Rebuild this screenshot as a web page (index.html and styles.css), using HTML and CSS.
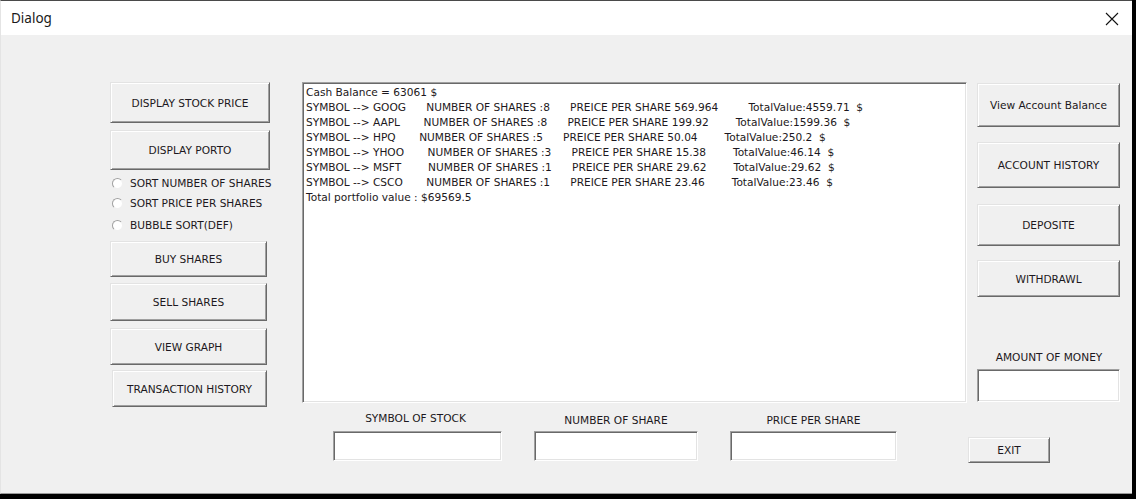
FILE: index.html
```html
<!DOCTYPE html>
<html>
<head>
<meta charset="utf-8">
<title>Dialog</title>
<link rel="stylesheet" href="styles.css">
</head>
<body>
<div class="window">
  <div class="titlebar">
    <span class="title">Dialog</span>
    <svg class="close" width="14" height="14" viewBox="0 0 14 14"><path d="M1 1 L13 13 M13 1 L1 13" stroke="#111" stroke-width="1.1" fill="none"/></svg>
  </div>
  <div class="client">
    <div class="col-left">
      <div class="btn b-stock">DISPLAY STOCK PRICE</div>
      <div class="btn b-porto">DISPLAY PORTO</div>
      <div class="radio r1"><span class="dot"></span>SORT NUMBER OF SHARES</div>
      <div class="radio r2"><span class="dot"></span>SORT PRICE PER SHARES</div>
      <div class="radio r3"><span class="dot"></span>BUBBLE SORT(DEF)</div>
      <div class="btn b-buy">BUY SHARES</div>
      <div class="btn b-sell">SELL SHARES</div>
      <div class="btn b-graph">VIEW GRAPH</div>
      <div class="btn b-trans">TRANSACTION HISTORY</div>
    </div>
    <div class="col-mid">
      <div class="output sunken"><div class="line">Cash Balance = 63061 $</div><div class="line">SYMBOL --&gt; GOOG      NUMBER OF SHARES :8      PREICE PER SHARE 569.964         TotalValue:4559.71  $</div><div class="line">SYMBOL --&gt; AAPL       NUMBER OF SHARES :8      PREICE PER SHARE 199.92        TotalValue:1599.36  $</div><div class="line">SYMBOL --&gt; HPQ       NUMBER OF SHARES :5      PREICE PER SHARE 50.04        TotalValue:250.2  $</div><div class="line">SYMBOL --&gt; YHOO       NUMBER OF SHARES :3      PREICE PER SHARE 15.38        TotalValue:46.14  $</div><div class="line">SYMBOL --&gt; MSFT        NUMBER OF SHARES :1      PREICE PER SHARE 29.62        TotalValue:29.62  $</div><div class="line">SYMBOL --&gt; CSCO       NUMBER OF SHARES :1      PREICE PER SHARE 23.46        TotalValue:23.46  $</div><div class="line">Total portfolio value : $69569.5</div></div>
      <div class="fields">
        <div class="field f1"><div class="label l-up">SYMBOL OF STOCK</div><div class="input sunken"></div></div>
        <div class="field f2"><div class="label">NUMBER OF SHARE</div><div class="input sunken"></div></div>
        <div class="field f3"><div class="label">PRICE PER SHARE</div><div class="input sunken"></div></div>
      </div>
    </div>
    <div class="col-right">
      <div class="btn rb b-view">View Account Balance</div>
      <div class="btn rb b-hist">ACCOUNT HISTORY</div>
      <div class="btn rb b-dep">DEPOSITE</div>
      <div class="btn rb b-with">WITHDRAWL</div>
      <div class="label amount-label">AMOUNT OF MONEY</div>
      <div class="input sunken amount"></div>
      <div class="btn b-exit">EXIT</div>
    </div>
  </div>
</div>
</body>
</html>
```

FILE: styles.css
```css
html, body {
  margin: 0;
  padding: 0;
}
body {
  background: #000;
  width: 1136px;
  height: 499px;
  overflow: hidden;
}
.window {
  width: 1132px;
  height: 494px;
  box-sizing: border-box;
  background: #f0f0f0;
  border-top: 1px solid #4a4a4a;
  border-bottom: 1px solid #9a9a9a;
  border-left: 1px solid #e4e4e4;
  display: flex;
  flex-direction: column;
  font-family: "DejaVu Sans", sans-serif;
  font-size: 10.6px;
  color: #1c1820;
}
.titlebar {
  height: 34px;
  flex: none;
  background: #fff;
  display: flex;
  align-items: center;
  justify-content: space-between;
  padding: 0 13px 0 10px;
}
.title {
  font-family: "Noto Sans", sans-serif;
  font-size: 13.5px;
  color: #1a1a1a;
  padding-bottom: 1px;
}
.close {
  display: block;
  margin-top: 1px;
}
.client {
  flex: 1;
  display: flex;
  padding-left: 109px;
}
.col-left {
  width: 160px;
  display: flex;
  flex-direction: column;
  align-items: flex-start;
  padding-top: 47px;
}
.btn {
  box-sizing: border-box;
  display: flex;
  align-items: center;
  justify-content: center;
  background: #f0f0f0;
  border-top: 1px solid #e3e3e3;
  border-left: 1px solid #e3e3e3;
  border-right: 1px solid #696969;
  border-bottom: 1px solid #696969;
  box-shadow: inset 1px 1px 0 #fff, inset -1px -1px 0 #a0a0a0;
  white-space: nowrap;
}
.b-stock { width: 160px; height: 41px; }
.b-porto { width: 160px; height: 40px; margin-top: 7px; }
.radio {
  height: 20px;
  display: flex;
  align-items: center;
  white-space: nowrap;
}
.r1 { margin-top: 3px; }
.r3 { margin-top: 2px; }
.dot {
  width: 11px;
  height: 11px;
  box-sizing: border-box;
  border-radius: 50%;
  background: #fff;
  border: 1px solid;
  border-color: #a0a0a0 #f0f0f0 #f0f0f0 #a0a0a0;
  margin: 0 7px 0 2px;
}
.b-buy { width: 157px; height: 36px; margin-top: 6px; }
.b-sell { width: 157px; height: 38px; margin-top: 6px; }
.b-graph { width: 157px; height: 37px; margin-top: 7px; }
.b-trans { width: 155px; height: 37px; margin-top: 5px; margin-left: 2px; }

.sunken {
  box-sizing: border-box;
  background: #fff;
  border-top: 1px solid #a0a0a0;
  border-left: 1px solid #a0a0a0;
  border-right: 1px solid #fff;
  border-bottom: 1px solid #fff;
  box-shadow: inset 1px 1px 0 #696969, inset -1px -1px 0 #e3e3e3;
}
.col-mid {
  width: 665px;
  margin-left: 32px;
  display: flex;
  flex-direction: column;
  padding-top: 47px;
}
.output {
  height: 321px;
  padding: 2px 3px 0 3px;
}
.line {
  white-space: pre;
  line-height: 15px;
}
.fields {
  display: flex;
  margin-top: 10px;
}
.field {
  display: flex;
  flex-direction: column;
  align-items: center;
}
.label {
  line-height: 14px;
  white-space: nowrap;
}
.l-up { margin-top: -2px; margin-bottom: 2px; margin-right: 4px; }
.field .input { align-self: stretch; height: 30px; margin-top: 4px; }
.f1 { width: 169px; margin-left: 31px; }
.f2 { width: 164px; margin-left: 32px; }
.f3 { width: 167px; margin-left: 32px; }

.col-right {
  width: 153px;
  margin-left: 1px;
  display: flex;
  flex-direction: column;
  align-items: flex-start;
  padding-top: 48px;
}
.rb { width: 143px; margin-left: 9px; }
.b-view { height: 44px; }
.b-hist { height: 46px; margin-top: 15px; }
.b-dep { height: 42px; margin-top: 16px; }
.b-with { height: 37px; margin-top: 14px; }
.amount-label { margin-top: 53px; align-self: stretch; text-align: center; padding-left: 9px; }
.amount { width: 143px; height: 33px; margin-left: 9px; margin-top: 5px; }
.b-exit { width: 82px; height: 26px; margin-top: 35px; }
```
